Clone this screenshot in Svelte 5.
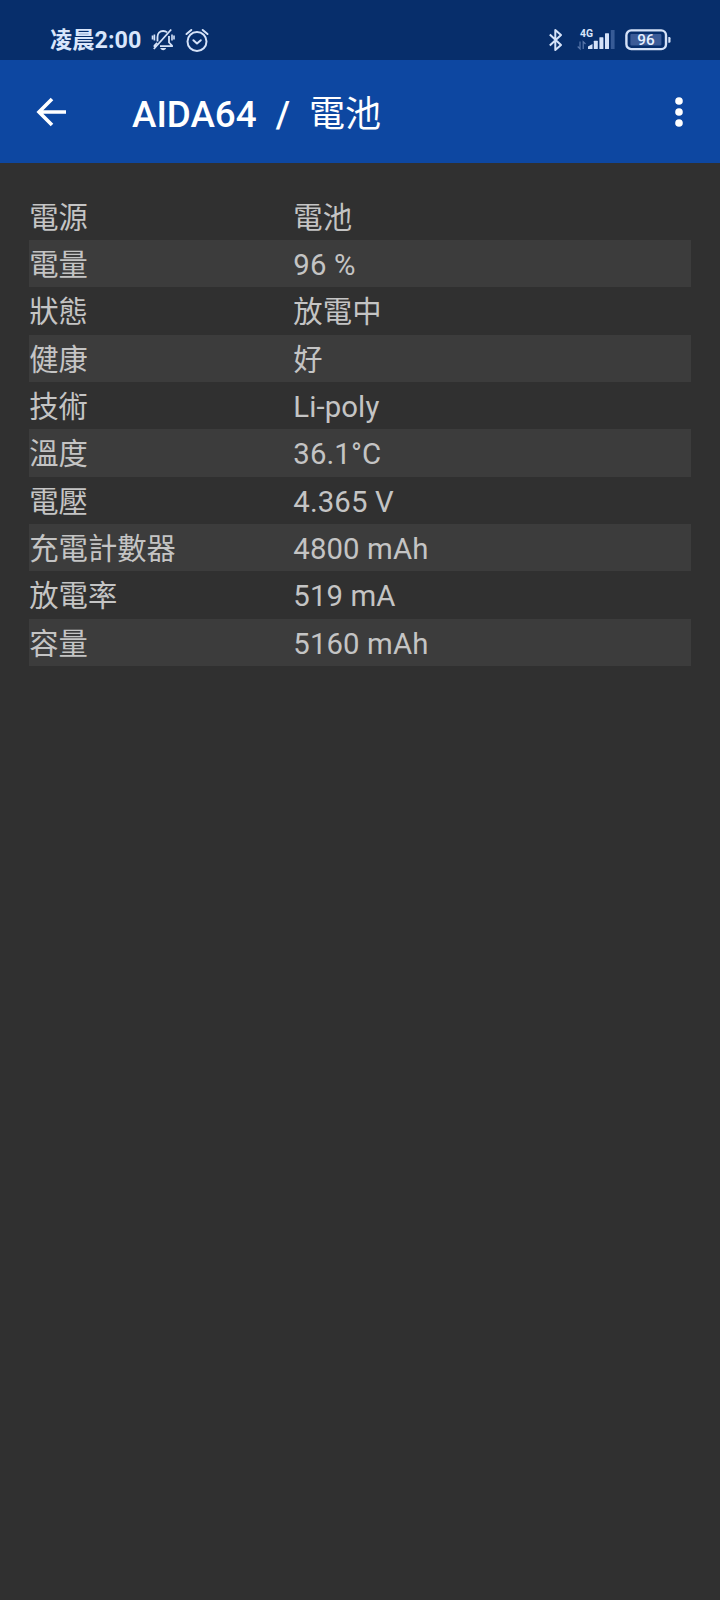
<script>
  const rows = [
    ['電源', '電池'],
    ['電量', '96 %'],
    ['狀態', '放電中'],
    ['健康', '好'],
    ['技術', 'Li-poly'],
    ['溫度', '36.1°C'],
    ['電壓', '4.365 V'],
    ['充電計數器', '4800 mAh'],
    ['放電率', '519 mA'],
    ['容量', '5160 mAh'],
  ];
</script>

<div class="screen" lang="zh-Hant">
  <div class="status">
    <span class="clock"><span class="cjk">凌晨</span><span>2:00</span></span>
    <svg class="bell" width="24" height="24" viewBox="0 0 24 24" fill="none" stroke="#d5e2f8" stroke-width="1.800">
      <path d="M6.500 13.500V9C6.500 5.300 8.700 3 12.200 3c1.600 0 2.900.5 3.900 1.400M18 8v6.500l3 3.200v.5H9M6.200 14.800L3.500 17.500v.7h1.800" />
      <path d="M20.200 1.500L2.800 21" />
      <path d="M3.400 6.500v6M1.500 7.500v4M21 6.500v6M23 7.500v4" stroke-width="1.600" />
      <path d="M9.300 20h5.800c-.4 1.400-1.400 2.200-2.900 2.200S9.700 21.400 9.300 20z" fill="#d5e2f8" stroke="none" />
    </svg>
    <svg class="alarm" width="24" height="25" viewBox="0 0 24 25" fill="none" stroke="#d5e2f8" stroke-width="2" stroke-linecap="round" stroke-linejoin="round">
      <circle cx="12" cy="13.500" r="9.500" />
      <path d="M1.500 6L6.300 2M22.500 6L17.700 2M8.400 12.200l3.600 3.200 3.800-3.200" />
    </svg>
    <span class="space"></span>
    <svg class="bluetooth" width="15" height="24" viewBox="0 0 15 24" fill="none" stroke="#d5e2f8" stroke-width="2" stroke-linejoin="round">
      <path d="M1.800 6.500L13 17l-5.700 5V2L13 7 1.800 17.500" />
    </svg>
    <svg class="signal" width="40" height="26" viewBox="0 0 40 26">
      <text x="3" y="9.500" textLength="13" lengthAdjust="spacingAndGlyphs">4G</text>
      <path d="M3 14.500v7.300L.700 19.500M6.200 22v-7.300L8.500 17" fill="none" stroke="#5977ab" stroke-width="1.200" />
      <g fill="#d5e2f8">
        <path d="M11 22v-2.500l4.500-2.500V22z" />
        <rect x="16.800" y="13.800" width="4" height="8.200" rx=".5" />
        <rect x="22.400" y="10.300" width="4" height="11.700" rx=".5" />
        <rect x="28" y="6.200" width="4" height="15.800" rx=".5" />
        <rect x="33.800" y="3" width="3.800" height="19" rx=".5" fill="#375b96" />
      </g>
    </svg>
    <svg class="battery" width="47" height="22" viewBox="0 0 47 22">
      <rect x="1.400" y="1.400" width="39.600" height="18.700" rx="4.800" fill="none" stroke="#d5e2f8" stroke-width="2.400" />
      <rect x="5.400" y="5" width="31" height="11.500" rx="1" fill="#3b5b97" />
      <path d="M43.300 8h1a1.200 1.200 0 0 1 1.200 1.200v3.300a1.200 1.200 0 0 1-1.200 1.200h-1z" fill="#d5e2f8" />
      <text x="21" y="16.200" text-anchor="middle">96</text>
    </svg>
  </div>

  <header>
    <svg class="back" width="32" height="32" viewBox="0 0 32 32" fill="none" stroke="#fff" stroke-width="3.600">
      <path d="M16 3L3 16 16 29M3 16h27" />
    </svg>
    <h1><span class="app">AIDA64</span><span class="slash">/</span><span class="page">電池</span></h1>
    <svg class="more" width="10" height="32" viewBox="0 0 10 32" fill="#fff">
      <circle cx="5" cy="5" r="3.800" /><circle cx="5" cy="16" r="3.800" /><circle cx="5" cy="27" r="3.800" />
    </svg>
  </header>

  <main>
    {#each rows as [label, value]}
      <div class="row"><span>{label}</span><span class="value">{value}</span></div>
    {/each}
  </main>
</div>

<style>
  :global(body) { background: #303030; }
  .screen {
    min-height: 1600px;
    background: #303030;
    font-family: Roboto, "Noto Sans CJK TC", sans-serif;
  }
  .status {
    display: flex;
    align-items: center;
    box-sizing: border-box;
    height: 60px;
    padding: 20px 48px 0 50px;
    background: #072e6b;
    color: #d9e6fb;
  }
  .clock { display: flex; align-items: baseline; width: 92px; font-size: 23.300px; font-weight: 700; line-height: 28px; white-space: nowrap; }
  .cjk { font-size: 22.300px; }
  .bell { margin-left: 9px; }
  .alarm { margin-left: 10px; }
  .space { flex: 1; }
  .bluetooth { margin-right: 14px; }
  .signal { margin-right: 8px; }
  .signal text { font: 700 11px Roboto, sans-serif; fill: #d9e6fb; }
  .battery text { font: 500 15.300px Roboto, sans-serif; fill: #e7f0ff; }
  header {
    display: flex;
    align-items: center;
    box-sizing: border-box;
    height: 103px;
    padding: 1px 36px 0 36px;
    background: #0d47a1;
    color: #fff;
  }
  h1 {
    display: flex;
    align-items: baseline;
    flex: 1;
    margin: 0 0 0 64px;
    padding-top: 5px;
    font-size: 36.800px;
    font-weight: 500;
    line-height: 50px;
    white-space: pre;
  }
  .slash { margin: 0 19px 0 19px; }
  .page { font-size: 36px; font-weight: 400; }
  main { padding: 29.600px 29.300px 0; color: #c4c4c4; }
  .row {
    display: grid;
    grid-template-columns: 264px 1fr;
    box-sizing: border-box;
    height: 47.330px;
    padding-top: 2px;
    font-size: 29.330px;
    line-height: 47.330px;
    white-space: nowrap;
  }
  .value { letter-spacing: .12px; }
  .row:nth-child(even) { background: #3c3c3c; }
</style>
